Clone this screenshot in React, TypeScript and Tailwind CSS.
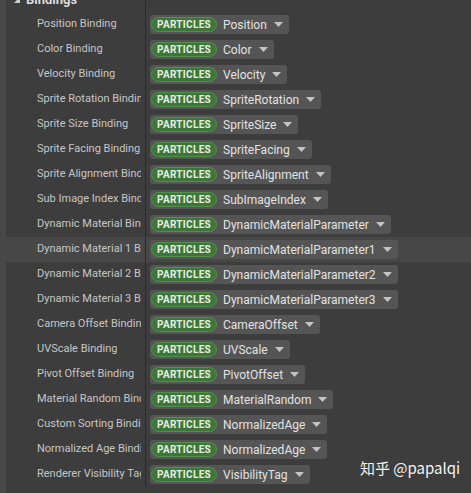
import React from "react";

const rows: [string, string][] = [
  ["Position Binding", "Position"],
  ["Color Binding", "Color"],
  ["Velocity Binding", "Velocity"],
  ["Sprite Rotation Binding", "SpriteRotation"],
  ["Sprite Size Binding", "SpriteSize"],
  ["Sprite Facing Binding", "SpriteFacing"],
  ["Sprite Alignment Binding", "SpriteAlignment"],
  ["Sub Image Index Binding", "SubImageIndex"],
  ["Dynamic Material Binding", "DynamicMaterialParameter"],
  ["Dynamic Material 1 Binding", "DynamicMaterialParameter1"],
  ["Dynamic Material 2 Binding", "DynamicMaterialParameter2"],
  ["Dynamic Material 3 Binding", "DynamicMaterialParameter3"],
  ["Camera Offset Binding", "CameraOffset"],
  ["UVScale Binding", "UVScale"],
  ["Pivot Offset Binding", "PivotOffset"],
  ["Material Random Binding", "MaterialRandom"],
  ["Custom Sorting Binding", "NormalizedAge"],
  ["Normalized Age Binding", "NormalizedAge"],
  ["Renderer Visibility Tag Binding", "VisibilityTag"],
];

function Caret() {
  return (
    <svg width="9" height="5" viewBox="0 0 9 5" className="ml-[7px] shrink-0">
      <path d="M0 0 H9 L4.5 5 Z" fill="#c4c4c4" />
    </svg>
  );
}

function Binding({ value }: { value: string }) {
  return (
    <div className="flex h-[19px] items-center rounded-[3px] bg-[#555555] pl-[1px] pr-[6px]">
      <span className="flex h-[15px] items-center rounded-full border border-[#53904d] bg-[#3d7639] px-[5px] text-[10px] font-bold tracking-[0.3px] text-[#e4eee2]">
        PARTICLES
      </span>
      <span className="ml-[6px] text-[12px] text-[#e2e2e2]">{value}</span>
      <Caret />
    </div>
  );
}

export default function App() {
  return (
    <div
      className="flex h-[493px] w-[471px] overflow-hidden bg-[#3d3d3d]"
      style={{ fontFamily: "Roboto, 'Noto Sans', sans-serif" }}
    >
      <div className="w-[6px] shrink-0 bg-[#484848]" />
      <div className="relative flex-1">
        <div className="mt-[-12px] flex h-[24px] items-center">
          <div className="flex w-[139px] items-center pl-[8px]">
            <svg width="6" height="6" viewBox="0 0 6 6">
              <path d="M6 0 V6 H0 Z" fill="#cfcfcf" />
            </svg>
            <span className="ml-[6px] text-[13px] font-bold text-[#dcdcdc]">Bindings</span>
          </div>
          <div className="h-full border-l border-[#2b2b2b]" />
        </div>
        {rows.map(([label, value], i) => (
          <div
            key={i}
            className={`grid h-[25px] grid-cols-[139px_1fr] ${i === 9 ? "bg-[#474747]" : ""}`}
          >
            <div className="flex items-center overflow-hidden whitespace-nowrap pl-[31px] pr-[4px] text-[11px] text-[#c6c6c6]">
              <span className="block overflow-hidden">{label}</span>
            </div>
            <div className="flex items-center border-l border-[#2b2b2b] pl-[4px]">
              <Binding value={value} />
            </div>
          </div>
        ))}
        <div className="absolute left-[354px] top-[457px] text-[15px] text-[#f2f2f2]"
          style={{ fontFamily: "'Noto Sans CJK SC', 'Noto Sans', sans-serif" }}>
          知乎 @papalqi
        </div>
      </div>
    </div>
  );
}
